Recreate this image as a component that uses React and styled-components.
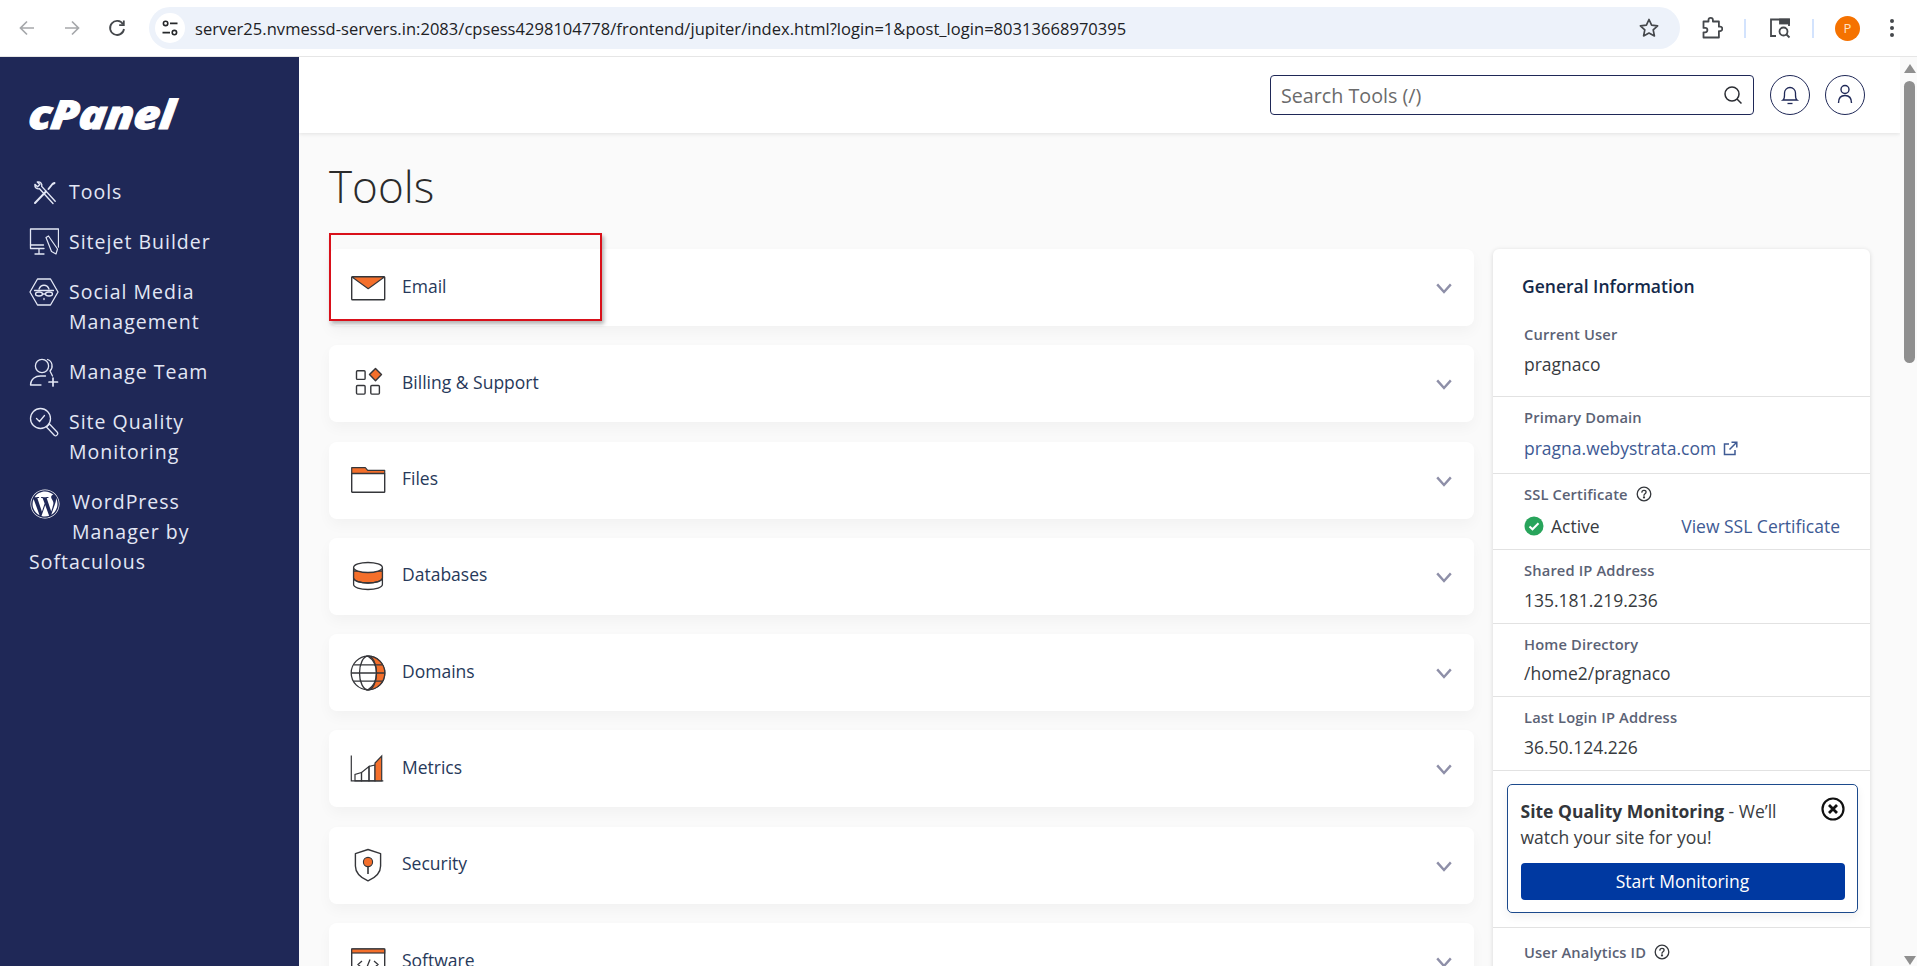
import React from "react";
import styled, { createGlobalStyle } from "styled-components";
import { FaWordpress } from "react-icons/fa";

const Global = createGlobalStyle`
  html, body { margin: 0; padding: 0; height: 100%; overflow: hidden; background: #fafafa; }
  * { box-sizing: border-box; }
  body { font-family: "Open Sans", "Noto Sans", sans-serif; }
`;

const Page = styled.div`
  width: 1917px;
  height: 966px;
  display: flex;
  flex-direction: column;
  overflow: hidden;
`;

/* browser chrome */
const ChromeBar = styled.div`
  height: 57px;
  flex: none;
  display: flex;
  align-items: center;
  background: #fff;
  padding-left: 12px;
  border-bottom: 1px solid #e6e6e6;
`;

const NavButton = styled.div`
  width: 30px;
  height: 30px;
  margin-right: 15px;
  display: flex;
  align-items: center;
  justify-content: center;
  color: ${props => props.$dim ? "#a6a8ab" : "#45484c"};
`;

const UrlPill = styled.div`
  width: 1531px;
  height: 42px;
  margin-left: 2px;
  border-radius: 21px;
  background: #edf2fa;
  display: flex;
  align-items: center;
  padding: 0 20px 0 6px;
`;

const TuneBadge = styled.div`
  width: 30px;
  height: 30px;
  border-radius: 50%;
  background: #fff;
  display: flex;
  align-items: center;
  justify-content: center;
  margin-right: 10px;
`;

const UrlText = styled.div`
  flex: 1;
  font-size: 16.5px;
  letter-spacing: 0.04px;
  color: #202124;
  white-space: nowrap;
`;

const ChromeTools = styled.div`
  display: flex;
  align-items: center;
  padding-left: 20px;
`;

const ChromeIcon = styled.div`
  width: 24px;
  height: 26px;
  margin-right: ${props => props.$gap}px;
  display: flex;
  align-items: center;
  justify-content: center;
  color: #45484c;
`;

const ChromeSep = styled.div`
  width: 2px;
  height: 19px;
  margin-right: ${props => props.$gap}px;
  background: #d3e3fd;
`;

const Avatar = styled.div`
  width: 25px;
  height: 25px;
  margin-right: 22px;
  border-radius: 50%;
  background: #f57200;
  color: #ffe3c4;
  font-size: 13px;
  display: flex;
  align-items: center;
  justify-content: center;
`;

const Body = styled.div`
  flex: 1;
  display: flex;
  min-height: 0;
`;

/* sidebar */
const Sidebar = styled.aside`
  width: 299px;
  flex: none;
  background: #1f2857;
  padding: 39px 60px 0 29px;
`;

const Logo = styled.div`
  height: 36px;
  margin-bottom: 45px;
  color: #fff;
  font-size: 40px;
  line-height: 36px;
  font-weight: 800;
  font-style: italic;
  letter-spacing: -0.5px;
  transform-origin: left center;
  transform: scaleX(1.14) skewX(-6deg);
  -webkit-text-stroke: 1px #fff;
`;

const Nav = styled.nav`
  display: flex;
  flex-direction: column;
  gap: 20px;
`;

const NavItem = styled.div`
  display: flex;
  gap: 10px;
  font-size: 19.5px;
  line-height: 30px;
  letter-spacing: 1px;
  color: #e3e7f5;
`;

const NavIcon = styled.div`
  width: 30px;
  height: 30px;
  flex: none;
  color: #e3e7f5;
`;

const FloatItem = styled.div`
  font-size: 19.5px;
  line-height: 30px;
  letter-spacing: 1px;
  color: #e3e7f5;
`;

const FloatIcon = styled.span`
  float: left;
  width: 32px;
  height: 40px;
  margin: 2px 10px 0 1px;
  font-size: 30px;
  line-height: 30px;
  color: #fff;
`;

/* main */
const Main = styled.main`
  width: 1601px;
  flex: none;
  overflow: hidden;
`;

const Header = styled.header`
  height: 76px;
  background: #fff;
  box-shadow: 0 1px 4px rgba(0, 0, 0, 0.1);
  display: flex;
  align-items: center;
  justify-content: flex-end;
  padding-right: 35px;
`;

const SearchBox = styled.div`
  width: 484px;
  height: 40px;
  margin-right: 16px;
  border: 1.5px solid #1f2857;
  border-radius: 4px;
  display: flex;
  align-items: center;
  justify-content: space-between;
  padding: 0 10px 0 10px;
  font-size: 19.7px;
  color: #6b6b6b;
`;

const RoundButton = styled.div`
  width: 40px;
  height: 40px;
  margin-left: ${props => props.$gap || 0}px;
  border: 1px solid #1f2857;
  border-radius: 50%;
  display: flex;
  align-items: center;
  justify-content: center;
  color: #1f2857;
`;

const Content = styled.div`
  padding: 0 30px;
`;

const Title = styled.h1`
  margin: 0;
  height: 116px;
  padding-top: 23px;
  font-size: 44px;
  line-height: 60px;
  font-weight: 300;
  color: #2b2b2b;
`;

const Columns = styled.div`
  display: flex;
  align-items: flex-start;
  gap: 19px;
  position: relative;
`;

const CardList = styled.div`
  flex: 1;
  display: flex;
  flex-direction: column;
  gap: 19.3px;
`;

const Card = styled.div`
  height: 77px;
  background: #fff;
  border-radius: 8px;
  box-shadow: 0 6px 14px rgba(0, 0, 0, 0.035);
  display: flex;
  align-items: center;
  padding: 0 22px 0 21px;
  svg.chevron { margin-top: 2px; }
`;

const CardIcon = styled.div`
  width: 36px;
  height: 36px;
  flex: none;
  margin-right: 16px;
`;

const CardLabel = styled.div`
  margin-right: auto;
  padding-bottom: 4px;
  font-size: 17.5px;
  color: #27395a;
`;

const Highlight = styled.div`
  position: absolute;
  left: 0;
  top: -16px;
  width: 273px;
  height: 88px;
  border: 2px solid #d9101a;
  box-shadow: 2px 3px 4px rgba(0, 0, 0, 0.3);
`;

/* info panel */
const Panel = styled.div`
  width: 377px;
  flex: none;
  background: #fff;
  border-radius: 6px;
  box-shadow: 0 1px 5px rgba(0, 0, 0, 0.14);
`;

const PanelTitle = styled.h2`
  margin: 0;
  padding: 24px 0 0 29px;
  height: 64px;
  font-size: 17.5px;
  line-height: 26px;
  font-weight: 600;
  color: #14294a;
`;

const Row = styled.div`
  padding: ${props => props.$top || 9}px 30px ${props => props.$bottom}px 31px;
  border-bottom: 1px solid #e2e2e2;
`;

const Label = styled.div`
  font-size: 14.7px;
  line-height: 22px;
  font-weight: 600;
  letter-spacing: 0.15px;
  color: #5b6275;
  display: flex;
  align-items: center;
  gap: 8px;
`;

const Value = styled.div`
  margin-top: ${props => props.$gap}px;
  font-size: 17.5px;
  line-height: 22px;
  color: ${props => props.$link ? "#3e5a94" : "#383b40"};
  display: flex;
  align-items: center;
  justify-content: space-between;
`;

const InlineGroup = styled.span`
  display: flex;
  align-items: center;
  gap: ${props => props.$gap}px;
`;

const LinkText = styled.span`
  color: #3e5a94;
`;

const PromoWrap = styled.div`
  padding: 13px 12px 14px 14px;
  border-bottom: 1px solid #e2e2e2;
`;

const Promo = styled.div`
  position: relative;
  height: 129px;
  border: 1.5px solid #1c4a8c;
  border-radius: 5px;
  padding: 12.5px 12.5px 0;
  box-shadow: 0 4px 10px rgba(0, 0, 0, 0.06);
`;

const PromoText = styled.div`
  width: 290px;
  font-size: 17.5px;
  line-height: 26px;
  color: #3a3d42;
  margin-bottom: 13px;
  b { font-weight: 700; color: #33363b; }
`;

const PromoClose = styled.div`
  position: absolute;
  top: 11.5px;
  right: 12.5px;
  width: 24px;
  height: 24px;
`;

const PromoButton = styled.div`
  height: 37px;
  background: #0039a1;
  border-radius: 4px;
  color: #fff;
  font-size: 17.5px;
  display: flex;
  align-items: center;
  justify-content: center;
`;

const LastRow = styled.div`
  padding: 13px 30px 0 31px;
  height: 60px;
`;

/* scrollbar */
const ScrollBar = styled.div`
  position: relative;
  width: 17px;
  flex: none;
  background: #fafafa;
`;

const ScrollThumb = styled.div`
  position: absolute;
  left: 4px;
  top: 24px;
  width: 11px;
  height: 282px;
  border-radius: 6px;
  background: #8f8f8f;
`;

const ScrollArrow = styled.div`
  position: absolute;
  left: 4px;
  ${props => props.$down ? "bottom: 1px;" : "top: 7px;"}
  width: 0;
  height: 0;
  border-left: 6px solid transparent;
  border-right: 6px solid transparent;
  ${props => props.$down ? "border-top: 9px solid #8f8f8f;" : "border-bottom: 9px solid #8f8f8f;"}
`;

const OR = "#f46f2b";
const INK = "#35363a";

const EmailIcon = () => (
  <svg width="36" height="36" viewBox="0 0 36 36" fill="none">
    <rect x="1.7" y="6.7" width="33" height="23" rx="0.8" fill="#fff" stroke={INK} strokeWidth="1.4" />
    <path d="M2 7h32.4L18.2 18.8z" fill={OR} stroke={INK} strokeWidth="1.1" strokeLinejoin="round" />
  </svg>
);

const BillingIcon = () => (
  <svg width="36" height="36" viewBox="0 0 36 36" fill="none" stroke={INK} strokeWidth="1.4">
    <rect x="6.5" y="4.8" width="8.6" height="8.6" rx="1" />
    <rect x="6.5" y="19.5" width="8.6" height="8.6" rx="1" />
    <rect x="20.8" y="19.5" width="8.6" height="8.6" rx="1" />
    <path d="M25.5 2.4l6 6.2-6 6.2-6-6.2z" fill={OR} strokeLinejoin="round" />
  </svg>
);

const FilesIcon = () => (
  <svg width="36" height="36" viewBox="0 0 36 36" fill="none">
    <path d="M1.7 11.5V5.7h13.6l2.4 2.7h17v3.1z" fill={OR} stroke={INK} strokeWidth="1.2" strokeLinejoin="round" />
    <rect x="1.7" y="11.5" width="33" height="18.8" rx="0.6" fill="#fff" stroke={INK} strokeWidth="1.4" />
  </svg>
);

const DatabaseIcon = () => (
  <svg width="36" height="36" viewBox="0 0 36 36" fill="none" stroke={INK} strokeWidth="1.3">
    <path d="M3.6 9.5v17c0 2.8 6.5 5 14.4 5s14.4-2.2 14.4-5v-17" fill="#fff" />
    <path d="M3.6 13v7c0 2.8 6.5 5 14.4 5s14.4-2.2 14.4-5v-7z" fill={OR} />
    <ellipse cx="18" cy="9.5" rx="14.4" ry="5" fill="#fff" />
    <path d="M3.6 20c0 2.8 6.5 5 14.4 5s14.4-2.2 14.4-5" />
  </svg>
);

const GlobeIcon = () => (
  <svg width="36" height="36" viewBox="0 0 36 36" fill="none" stroke={INK} strokeWidth="1.3">
    <circle cx="18" cy="18" r="16.8" fill="#fff" />
    <path d="M18 1.2c9.3 0 16.8 7.5 16.8 16.8S27.3 34.8 18 34.8c5.5-3.5 8.5-9.6 8.5-16.8S23.5 4.7 18 1.2z" fill={OR} />
    <ellipse cx="18" cy="18" rx="8.5" ry="16.8" />
    <path d="M1.2 18h33.6M3.8 9.8h28.4M3.8 26.2h28.4" />
  </svg>
);

const MetricsIcon = () => (
  <svg width="36" height="36" viewBox="0 0 36 36" fill="none" stroke={INK} strokeWidth="1.2">
    <path d="M1.3 4.5v25.3h32" />
    <path d="M5 29.8v-6.3l6.5-2v8.3z" />
    <path d="M11.5 29.8v-8.3l7.5-6v14.3z" />
    <path d="M19 29.8V15.5l6-1.5v15.8z" />
    <path d="M25 29.8V12l6.7-7v24.8z" fill={OR} />
  </svg>
);

const ShieldIcon = () => (
  <svg width="36" height="36" viewBox="0 0 36 36" fill="none">
    <path d="M18 2.5l12.6 4.2v12.2c0 6.7-5 11.6-12.6 15-7.6-3.4-12.6-8.3-12.6-15V6.7z" fill="#fff" stroke={INK} strokeWidth="1.4" strokeLinejoin="round" />
    <path d="M18 19v8" stroke={INK} strokeWidth="1.6" />
    <circle cx="18" cy="15" r="4.6" fill={OR} stroke={INK} strokeWidth="1.1" />
  </svg>
);

const SoftwareIcon = () => (
  <svg width="36" height="36" viewBox="0 0 36 36" fill="none" stroke={INK} strokeWidth="1.4">
    <rect x="1.7" y="5" width="33" height="27" rx="0.8" fill="#fff" />
    <rect x="1.7" y="5" width="33" height="4" fill={OR} strokeWidth="1.2" />
    <path d="M12 17l-4 3.5 4 3.5M24 17l4 3.5-4 3.5M20 15.5l-4 10" strokeWidth="1.3" />
  </svg>
);

const Chevron = () => (
  <svg className="chevron" width="16" height="11" viewBox="0 0 16 11" fill="none" stroke="#8e8fa8" strokeWidth="2.4">
    <path d="M1.2 1.4L8 9l6.8-7.6" />
  </svg>
);

const SidebarIcon = ({ children }) => (
  <NavIcon>
    <svg width="30" height="30" viewBox="0 0 30 30" fill="none" stroke="currentColor" strokeWidth="1.3" strokeLinecap="round" strokeLinejoin="round">
      {children}
    </svg>
  </NavIcon>
);

const sections = [
  ["Email", EmailIcon],
  ["Billing & Support", BillingIcon],
  ["Files", FilesIcon],
  ["Databases", DatabaseIcon],
  ["Domains", GlobeIcon],
  ["Metrics", MetricsIcon],
  ["Security", ShieldIcon],
  ["Software", SoftwareIcon],
];

const HelpIcon = () => (
  <svg width="16" height="16" viewBox="0 0 16 16" fill="none" stroke="#34373c" strokeWidth="1.3">
    <circle cx="8" cy="8" r="6.8" />
    <path d="M5.9 6.2c0-1.2 1-1.9 2.1-1.9s2.1.7 2.1 1.8c0 1.7-2.1 1.6-2.1 3.2" strokeLinecap="round" />
    <circle cx="8" cy="11.4" r="0.5" fill="#34373c" />
  </svg>
);

export default function App() {
  return (
    <Page>
      <Global />
      <ChromeBar>
        <NavButton $dim>
          <svg width="20" height="20" viewBox="0 0 20 20" fill="none" stroke="currentColor" strokeWidth="1.7">
            <path d="M17 10H3.5M10 3.5L3.5 10l6.5 6.5" />
          </svg>
        </NavButton>
        <NavButton $dim>
          <svg width="20" height="20" viewBox="0 0 20 20" fill="none" stroke="currentColor" strokeWidth="1.7">
            <path d="M3 10h13.5M10 3.5l6.5 6.5-6.5 6.5" />
          </svg>
        </NavButton>
        <NavButton>
          <svg width="20" height="20" viewBox="0 0 20 20" fill="none" stroke="currentColor" strokeWidth="1.8">
            <path d="M16 6.2A7 7 0 1 0 17 11" />
            <path d="M16.8 2.5v4.6h-4.6" />
          </svg>
        </NavButton>
        <UrlPill>
          <TuneBadge>
            <svg width="18" height="18" viewBox="0 0 18 18" fill="none" stroke="#26282b" strokeWidth="1.6">
              <circle cx="4.6" cy="4.4" r="2.2" />
              <path d="M9 4.4h7.5M1.5 13.6H9" />
              <circle cx="13.4" cy="13.6" r="2.2" />
            </svg>
          </TuneBadge>
          <UrlText>server25.nvmessd-servers.in:2083/cpsess4298104778/frontend/jupiter/index.html?login=1&post_login=80313668970395</UrlText>
          <svg width="22" height="22" viewBox="0 0 22 22" fill="none" stroke="#45484c" strokeWidth="1.7" strokeLinejoin="round">
            <path d="M11 2.5l2.6 5.6 6 .7-4.4 4.1 1.2 6L11 16l-5.4 2.9 1.2-6-4.4-4.1 6-.7z" />
          </svg>
        </UrlPill>
        <ChromeTools>
          <ChromeIcon $gap={20}>
            <svg width="22" height="24" viewBox="0 0 22 24" fill="none" stroke="currentColor" strokeWidth="1.8" strokeLinejoin="round">
              <path d="M2.5 5.5h5V4a2.2 2.2 0 0 1 4.4 0v1.5h6v5.2h1.2a2.2 2.2 0 0 1 0 4.4h-1.2v6.4H2.5v-5.2h1.7a2.2 2.2 0 0 0 0-4.4H2.5z" />
            </svg>
          </ChromeIcon>
          <ChromeSep $gap={22} />
          <ChromeIcon $gap={20}>
            <svg width="24" height="24" viewBox="0 0 24 24" fill="none" stroke="currentColor" strokeWidth="1.8">
              <path d="M8 20H3V3.5h18V10" />
              <rect x="12" y="3.5" width="9" height="4" fill="currentColor" />
              <circle cx="15.5" cy="15.5" r="4" />
              <path d="M18.5 18.5l3 3" />
            </svg>
          </ChromeIcon>
          <ChromeSep $gap={21} />
          <Avatar>P</Avatar>
          <svg width="20" height="24" viewBox="0 0 20 24" fill="#45484c">
            <circle cx="10" cy="5" r="2" />
            <circle cx="10" cy="12" r="2" />
            <circle cx="10" cy="19" r="2" />
          </svg>
        </ChromeTools>
      </ChromeBar>
      <Body>
        <Sidebar>
          <Logo>cPanel</Logo>
          <Nav>
            <NavItem>
              <SidebarIcon>
                <path d="M6 26L17 14.5M19.5 12l4-5 2-1" strokeWidth="2" />
                <path d="M24 26.5L10.5 11.8c-2.7.6-5-1.4-4.6-4.4l2.7 2.3 2.2-2.2L8.3 5c3-.7 5.2 1.8 4.4 4.4l13.5 14.8" strokeWidth="1.4" />
              </SidebarIcon>
              Tools
            </NavItem>
            <NavItem>
              <SidebarIcon>
                <path d="M15 21.5H1.5V2h28v18" />
                <path d="M1.5 18h13M6 27h9M10 22v4" />
                <path d="M17 10.5l2.5-1.5 9 13-1.5 5-4.5-2.5z" strokeWidth="1.2" />
              </SidebarIcon>
              Sitejet Builder
            </NavItem>
            <NavItem>
              <SidebarIcon>
                <path d="M8.5 2h13L29 15l-7.5 13h-13L1 15z" />
                <path d="M10 12c2-5 8-5 10 0M5.5 13.5h19" />
                <ellipse cx="10" cy="17" rx="3.5" ry="2" />
                <ellipse cx="20" cy="17" rx="3.5" ry="2" />
                <path d="M13.5 17h3M15 21.5v1" />
              </SidebarIcon>
              <span>Social Media<br />Management</span>
            </NavItem>
            <NavItem>
              <SidebarIcon>
                <circle cx="13" cy="9" r="6.6" />
                <path d="M1.5 28c0-6 5-9 10-9h5M1.5 28H12M18.5 2.5c5 1.5 6 8 2.5 11.5l2.5 5" />
                <path d="M24 21v8M20 25h8.5" strokeWidth="1.7" />
              </SidebarIcon>
              Manage Team
            </NavItem>
            <NavItem>
              <SidebarIcon>
                <circle cx="11.5" cy="11.5" r="10" />
                <path d="M7.5 11.5l3 3 5-6" />
                <path d="M17.5 20l3-3 8 8.5c1 2-1.5 4-3 3z" />
              </SidebarIcon>
              <span>Site Quality<br />Monitoring</span>
            </NavItem>
            <FloatItem>
              <FloatIcon><FaWordpress /></FloatIcon>
              WordPress Manager by Softaculous
            </FloatItem>
          </Nav>
        </Sidebar>
        <Main>
          <Header>
            <SearchBox>
              Search Tools (/)
              <svg width="20" height="20" viewBox="0 0 20 20" fill="none" stroke="#2b2d33" strokeWidth="1.5">
                <circle cx="9" cy="9" r="7" />
                <path d="M14 14l4.5 4.5" />
              </svg>
            </SearchBox>
            <RoundButton>
              <svg width="20" height="22" viewBox="0 0 20 22" fill="none" stroke="currentColor" strokeWidth="1.3">
                <path d="M3 16c1.5-1 1.5-2.5 1.5-5V9a5.5 5.5 0 0 1 11 0v2c0 2.5 0 4 1.5 5z" />
                <path d="M7.5 19.5h5" />
              </svg>
            </RoundButton>
            <RoundButton $gap={15}>
              <svg width="20" height="24" viewBox="0 0 20 24" fill="none" stroke="currentColor" strokeWidth="1.4">
                <circle cx="10" cy="6.5" r="4" />
                <path d="M3.5 20c0-5 2.5-7.5 6.5-7.5s6.5 2.5 6.5 7.500" />
              </svg>
            </RoundButton>
          </Header>
          <Content>
            <Title>Tools</Title>
            <Columns>
              <CardList>
                {sections.map(([name, Icon]) => (
                  <Card key={name}>
                    <CardIcon><Icon /></CardIcon>
                    <CardLabel>{name}</CardLabel>
                    <Chevron />
                  </Card>
                ))}
              </CardList>
              <Highlight />
              <Panel>
                <PanelTitle>General Information</PanelTitle>
                <Row $top={10} $bottom={21}>
                  <Label>Current User</Label>
                  <Value $gap={8}>pragnaco</Value>
                </Row>
                <Row $bottom={14}>
                  <Label>Primary Domain</Label>
                  <Value $link $gap={9}>
                    <InlineGroup $gap={7}>
                      pragna.webystrata.com
                      <svg width="15" height="15" viewBox="0 0 15 15" fill="none" stroke="#3e5a94" strokeWidth="1.5">
                        <path d="M6 3H1.5v10.5H12V9M8.5 1.2h5.3v5.300M13.5 1.5L6.5 8.5" />
                      </svg>
                    </InlineGroup>
                  </Value>
                </Row>
                <Row $bottom={12} $top={9}>
                  <Label>SSL Certificate <HelpIcon /></Label>
                  <Value $gap={10}>
                    <InlineGroup $gap={7}>
                      <svg width="20" height="20" viewBox="0 0 20 20">
                        <circle cx="10" cy="10" r="9.5" fill="#28a45b" />
                        <path d="M5.5 10.5l3 2.8 6-6" fill="none" stroke="#fff" strokeWidth="2" />
                      </svg>
                      Active
                    </InlineGroup>
                    <LinkText>View SSL Certificate</LinkText>
                  </Value>
                </Row>
                <Row $bottom={12}>
                  <Label>Shared IP Address</Label>
                  <Value $gap={8}>135.181.219.236</Value>
                </Row>
                <Row $bottom={12}>
                  <Label>Home Directory</Label>
                  <Value $gap={7}>/home2/pragnaco</Value>
                </Row>
                <Row $bottom={12} $top={9}>
                  <Label>Last Login IP Address</Label>
                  <Value $gap={8}>36.50.124.226</Value>
                </Row>
                <PromoWrap>
                  <Promo>
                    <PromoText><b>Site Quality Monitoring</b> - We’ll watch your site for you!</PromoText>
                    <PromoClose>
                      <svg width="24" height="24" viewBox="0 0 24 24" fill="none" stroke="#111" strokeWidth="2.2">
                        <circle cx="12" cy="12" r="10.5" />
                        <path d="M8 8l8 8M16 8l-8 8" strokeWidth="2.8" />
                      </svg>
                    </PromoClose>
                    <PromoButton>Start Monitoring</PromoButton>
                  </Promo>
                </PromoWrap>
                <LastRow>
                  <Label>User Analytics ID <HelpIcon /></Label>
                </LastRow>
              </Panel>
            </Columns>
          </Content>
        </Main>
        <ScrollBar>
          <ScrollArrow />
          <ScrollThumb />
          <ScrollArrow $down />
        </ScrollBar>
      </Body>
    </Page>
  );
}
